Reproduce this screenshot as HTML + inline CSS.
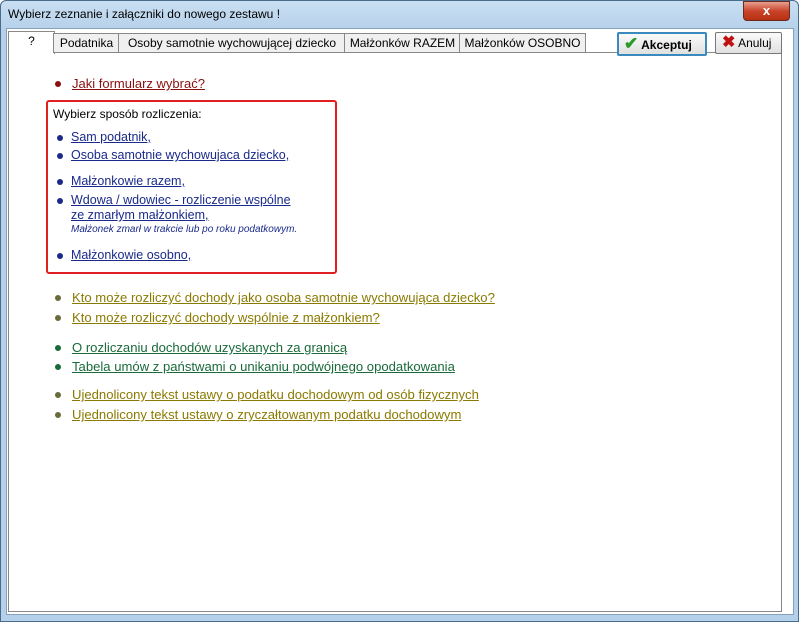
<!DOCTYPE html>
<html><head><meta charset="utf-8"><style>
body{margin:0;width:799px;height:622px;overflow:hidden;font-family:"Liberation Sans",sans-serif;background:#fff;position:relative}
.frame{position:absolute;left:0;top:0;width:797px;height:620px;border:1px solid #4a6c8c;border-radius:6px 6px 0 0;background:linear-gradient(#c9dff2,#b5d0ea 30px);}
.inner{position:absolute;left:6px;top:28px;width:786px;height:585px;background:#fff;border:1px solid #8aa0b8}
.title{position:absolute;left:8px;top:7px;font-size:12px;color:#000}
.close{position:absolute;left:743px;top:1px;width:45px;height:18px;background:linear-gradient(#e8a090,#c8442a 50%,#b83010);border:1px solid #6a2a20;border-radius:0 0 4px 4px;color:#fff;font-weight:bold;font-size:13px;text-align:center;line-height:18px}
.tab{position:absolute;top:33px;height:18px;background:#f0f0f0;border:1px solid #888;border-bottom:none;font-size:12px;line-height:18px;text-align:center;color:#000}
.panel{position:absolute;left:8px;top:52px;width:772px;height:559px;border:1px solid #888;border-top:none}
.ptop{position:absolute;left:53px;top:52px;width:728px;border-top:1px solid #888}
.btn{position:absolute;top:32px;height:20px;background:linear-gradient(#fafafa,#e0e0e0);border:1px solid #777;border-radius:2px;font-size:12px;font-weight:bold;line-height:20px}
a{position:absolute;font-size:12.5px;text-decoration:underline;white-space:nowrap}
a.b{font-size:13.1px}
.d{position:absolute;width:6px;height:6px;border-radius:50%}
.box{position:absolute;left:46px;top:100px;width:287px;height:170px;border:2px solid #e02020;border-radius:3px}
</style></head><body>
<div class="frame"></div>
<div class="inner"></div>
<div class="title">Wybierz zeznanie i załączniki do nowego zestawu !</div>
<div class="close">x</div>
<div class="tab" style="left:8px;top:31px;width:45px;height:22px;background:#fff;border-bottom:none">?</div>
<div class="tab" style="left:53px;width:65px">Podatnika</div>
<div class="tab" style="left:118px;width:226px">Osoby samotnie wychowującej dziecko</div>
<div class="tab" style="left:344px;width:115px">Małżonków RAZEM</div>
<div class="tab" style="left:459px;width:125px">Małżonków OSOBNO</div>
<div class="panel"></div><div class="ptop"></div>
<div class="btn" style="left:617px;width:86px;border:2px solid #3a8ac0"><span style="color:#2a9a2a;font-size:17px;margin-left:5px">✔</span> Akceptuj</div>
<div class="btn" style="left:715px;width:65px;font-weight:normal"><span style="color:#c01010;font-weight:bold;font-size:16px;margin-left:6px">✖</span> Anuluj</div>

<span class="d" style="left:55px;top:81px;background:#8a1010"></span>
<a style="left:72px;top:76px;color:#8a1010;font-size:13px">Jaki formularz wybrać?</a>

<div class="box"></div>
<div style="position:absolute;left:53px;top:107px;font-size:12px;color:#000">Wybierz sposób rozliczenia:</div>
<span class="d" style="left:57px;top:135px;background:#1a2a8a"></span><a style="left:71px;top:130px;color:#1a2a8a">Sam podatnik,</a>
<span class="d" style="left:57px;top:153px;background:#1a2a8a"></span><a style="left:71px;top:148px;color:#1a2a8a">Osoba samotnie wychowujaca dziecko,</a>
<span class="d" style="left:57px;top:179px;background:#1a2a8a"></span><a style="left:71px;top:174px;color:#1a2a8a">Małżonkowie razem,</a>
<span class="d" style="left:57px;top:198px;background:#1a2a8a"></span><a style="left:71px;top:193px;color:#1a2a8a">Wdowa / wdowiec - rozliczenie wspólne</a>
<a style="left:71px;top:208px;color:#1a2a8a">ze zmarłym małżonkiem,</a>
<div style="position:absolute;left:71px;top:224px;font-size:10px;font-style:italic;color:#1a2a8a">Małżonek zmarł w trakcie lub po roku podatkowym.</div>
<span class="d" style="left:57px;top:253px;background:#1a2a8a"></span><a style="left:71px;top:248px;color:#1a2a8a">Małżonkowie osobno,</a>

<span class="d" style="left:55px;top:295px;background:#6a6a3a"></span><a class="b" style="left:72px;top:290px;color:#8a7a00">Kto może rozliczyć dochody jako osoba samotnie wychowująca dziecko?</a>
<span class="d" style="left:55px;top:315px;background:#6a6a3a"></span><a class="b" style="left:72px;top:310px;color:#8a7a00">Kto może rozliczyć dochody wspólnie z małżonkiem?</a>
<span class="d" style="left:55px;top:345px;background:#1a6a3a"></span><a class="b" style="left:72px;top:340px;color:#1a6a3a">O rozliczaniu dochodów uzyskanych za granicą</a>
<span class="d" style="left:55px;top:364px;background:#1a6a3a"></span><a class="b" style="left:72px;top:359px;color:#1a6a3a">Tabela umów z państwami o unikaniu podwójnego opodatkowania</a>
<span class="d" style="left:55px;top:392px;background:#6a6a3a"></span><a class="b" style="left:72px;top:387px;color:#8a7a00">Ujednolicony tekst ustawy o podatku dochodowym od osób fizycznych</a>
<span class="d" style="left:55px;top:412px;background:#6a6a3a"></span><a class="b" style="left:72px;top:407px;color:#8a7a00">Ujednolicony tekst ustawy o zryczałtowanym podatku dochodowym</a>
</body></html>
